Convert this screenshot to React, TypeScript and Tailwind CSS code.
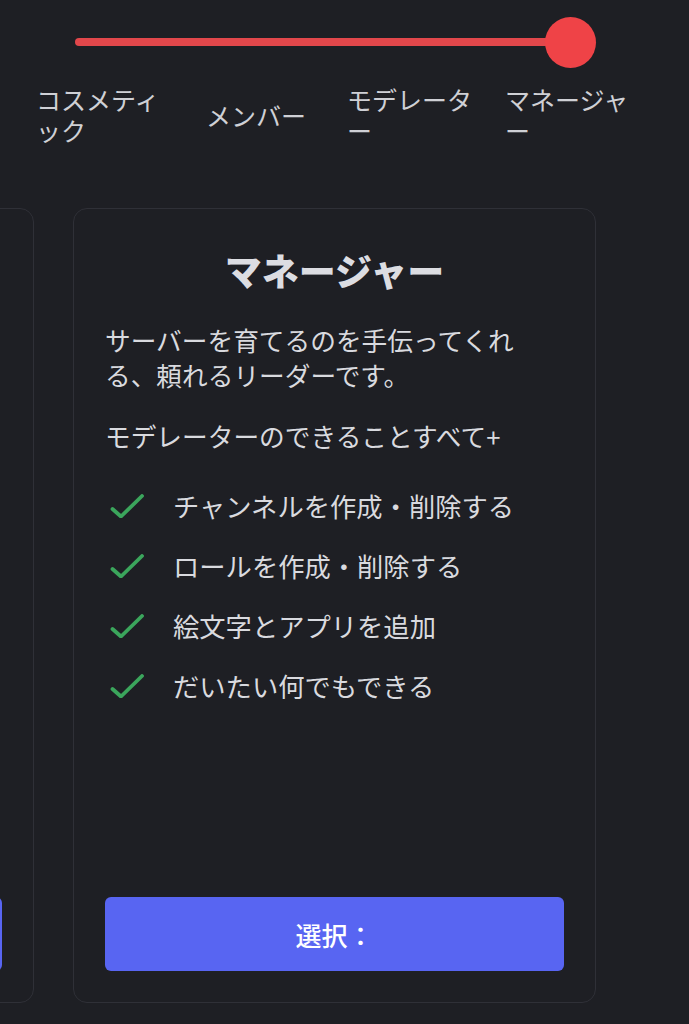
import React, { FC } from 'react';

const FONT = { fontFamily: '"Noto Sans CJK JP", "Noto Sans", sans-serif' };

const roles = ['コスメティック', 'メンバー', 'モデレーター', 'マネージャー'];

interface RoleCardProps {
  title?: string;
  description?: string;
  inherits?: string;
  perks?: string[];
  className?: string;
}

const Check: FC = () => (
  <svg
    viewBox="0 0 34 24"
    className="w-[34px] h-[24px] shrink-0 ml-[5px]"
    fill="none"
    stroke="#3ba55c"
    strokeWidth={3.8}
    strokeLinecap="round"
    strokeLinejoin="round"
  >
    <path d="M2.5 15 L11 22.5 L32 2" />
  </svg>
);

const RoleCard: FC<RoleCardProps> = ({
  title,
  description,
  inherits,
  perks = [],
  className,
}) => {
  return (
    <div
      className={`w-[523px] h-[795px] shrink-0 flex flex-col rounded-[14px] border border-[#2f3037] bg-[#1e1f24] px-[31px] pt-[37px] pb-[31px] ${className ?? ''}`}
    >
      {title && (
        <>
          <div className="text-center text-[37px] leading-[48px] font-black text-[#dcdde2]">
            {title}
          </div>
          <p className="mt-[28px] text-[25.7px] leading-[35px] text-[#d9dadf]">
            {description}
          </p>
          <p className="mt-[26px] text-[25.7px] leading-[35px] text-[#d9dadf]">
            {inherits}
          </p>
          <ul className="mt-[35px] flex flex-col gap-[25px]">
            {perks.map((perk) => (
              <li key={perk} className="flex items-center h-[35px]">
                <Check />
                <span className="ml-[29px] text-[26.3px] leading-[35px] text-[#d9dadf] whitespace-nowrap">
                  {perk}
                </span>
              </li>
            ))}
          </ul>
        </>
      )}
      <button className="mt-auto h-[74px] w-full rounded-[6px] bg-[#5865f2] text-white text-[26px] font-medium">
        {title ? '選択：' : ''}
      </button>
    </div>
  );
};

export default function App() {
  return (
    <div className="w-[689px] h-[1024px] overflow-hidden bg-[#1e1f24]" style={FONT}>
      {/* slider */}
      <div className="ml-[75px] w-[521px] pt-[17px] h-[67px] flex items-center">
        <div className="flex-1 h-[8px] rounded-full bg-[#e2474b]" />
        <div className="-ml-[12px] w-[51px] h-[51px] rounded-full bg-[#ef4347]" />
      </div>

      {/* role labels */}
      <div className="mt-[17px] flex items-center text-[25px] leading-[31px] text-[#cfd0d5]">
        <div className="ml-[36px] w-[130px]">{roles[0]}</div>
        <div className="ml-[40px] w-[130px]">{roles[1]}</div>
        <div className="ml-[11px] w-[130px]">{roles[2]}</div>
        <div className="ml-[28px] w-[130px]">{roles[3]}</div>
      </div>

      {/* cards */}
      <div className="mt-[62px] flex gap-[39px]">
        <RoleCard className="-ml-[489px]" />
        <RoleCard
          title="マネージャー"
          description="サーバーを育てるのを手伝ってくれる、頼れるリーダーです。"
          inherits="モデレーターのできることすべて+"
          perks={[
            'チャンネルを作成・削除する',
            'ロールを作成・削除する',
            '絵文字とアプリを追加',
            'だいたい何でもできる',
          ]}
        />
      </div>
    </div>
  );
}
